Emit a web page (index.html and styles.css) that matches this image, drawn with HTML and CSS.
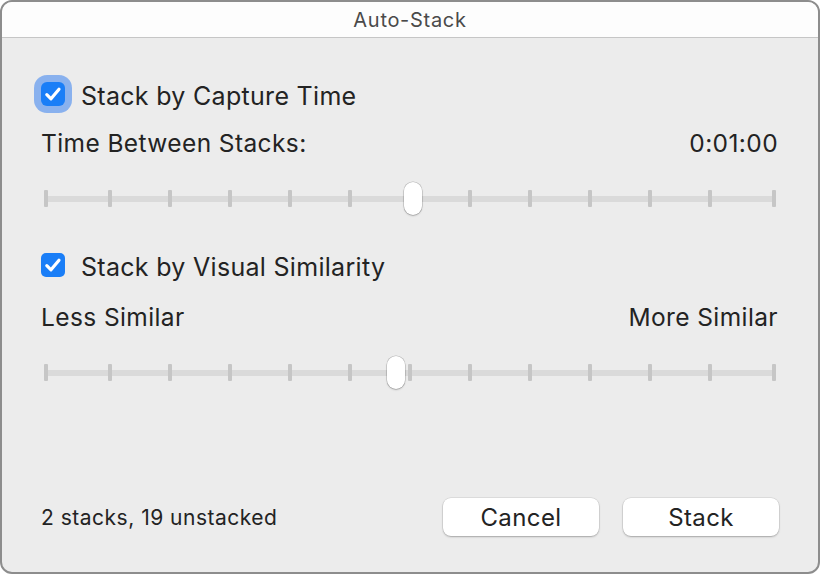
FILE: index.html
```html
<!DOCTYPE html>
<html>
<head>
<meta charset="utf-8">
<link rel="stylesheet" href="styles.css">
</head>
<body>
<div class="window">
  <div class="titlebar">Auto-Stack</div>
  <div class="content">
    <div class="check-row first">
      <span class="checkbox focused"><svg viewBox="0 0 24 24" width="24" height="24"><path d="M5.8 12.6 L10 16.8 L18 7.2" fill="none" stroke="#fff" stroke-width="3.2" stroke-linecap="round" stroke-linejoin="round"/></svg></span>
      <span class="check-label">Stack by Capture Time</span>
    </div>
    <div class="label-row row-a">
      <span>Time Between Stacks:</span>
      <span>0:01:00</span>
    </div>
    <div class="slider slider-a">
      <div class="track"></div>
      <div class="ticks">
        <i></i><i></i><i></i><i></i><i></i><i></i><i></i><i></i><i></i><i></i><i></i><i></i><i></i>
      </div>
      <div class="thumb thumb-a"></div>
    </div>
    <div class="check-row second">
      <span class="checkbox"><svg viewBox="0 0 24 24" width="24" height="24"><path d="M5.8 12.6 L10 16.8 L18 7.2" fill="none" stroke="#fff" stroke-width="3.2" stroke-linecap="round" stroke-linejoin="round"/></svg></span>
      <span class="check-label">Stack by Visual Similarity</span>
    </div>
    <div class="label-row row-b">
      <span>Less Similar</span>
      <span>More Similar</span>
    </div>
    <div class="slider slider-b">
      <div class="track"></div>
      <div class="ticks">
        <i></i><i></i><i></i><i></i><i></i><i></i><i></i><i></i><i></i><i></i><i></i><i></i><i></i>
      </div>
      <div class="thumb thumb-b"></div>
    </div>
    <div class="footer">
      <span class="status">2 stacks, 19 unstacked</span>
      <div class="buttons">
        <button class="btn">Cancel</button>
        <button class="btn">Stack</button>
      </div>
    </div>
  </div>
</div>
</body>
</html>
```

FILE: styles.css
```css
* { box-sizing: border-box; }
html, body { margin: 0; padding: 0; }
body {
  width: 820px;
  height: 574px;
  background: #ffffff;
  font-family: Inter, "Liberation Sans", sans-serif;
  color: #232323;
}
.window {
  width: 820px;
  height: 574px;
  border: 2px solid #8d8d8d;
  border-radius: 12px;
  overflow: hidden;
  background: #ececec;
  display: flex;
  flex-direction: column;
}
.titlebar {
  height: 36px;
  background: #fdfdfd;
  border-bottom: 1px solid #c6c6c6;
  display: flex;
  align-items: center;
  justify-content: center;
  font-size: 20px;
  color: #4a4a4a;
  letter-spacing: 0.7px;
  padding-top: 1px;
}
.content {
  flex: 1;
  padding: 0 39px 0 39px;
  display: flex;
  flex-direction: column;
}
.check-row {
  height: 38px;
  display: flex;
  align-items: center;
}
.check-row.first { margin-top: 37px; }
.check-row.second { margin-top: 30px; }
.checkbox {
  width: 24px;
  height: 24px;
  border-radius: 5px;
  background: #1a7ef7;
  display: inline-flex;
  flex: none;
}
.checkbox.focused {
  box-shadow: 0 0 0 7px rgba(72, 138, 240, 0.6);
  border-radius: 6px;
}
.check-label {
  margin-left: 16px;
  font-size: 25px;
  letter-spacing: 0.3px;
  padding-top: 3px;
}
.label-row {
  height: 30px;
  display: flex;
  justify-content: space-between;
  align-items: center;
  font-size: 24.5px;
  letter-spacing: 0.4px;
  padding-right: 1px;
}
.row-a { margin-top: 15px; }
.row-b { margin-top: 18px; }
.slider {
  position: relative;
  width: 732px;
  height: 34px;
  margin-left: 3px;
}
.slider-a { margin-top: 24px; }
.slider-b { margin-top: 24px; }
.track {
  position: absolute;
  left: 0;
  right: 0;
  top: 14px;
  height: 6px;
  background: #dadada;
  border-radius: 2px;
}
.ticks {
  position: absolute;
  left: 0;
  top: 8px;
  display: flex;
}
.ticks i {
  display: block;
  width: 4px;
  height: 17px;
  background: #c6c6c6;
  margin-left: 56px;
  border-radius: 1px;
}
.ticks i:first-child { margin-left: 0; }
.ticks i:nth-child(2) { margin-left: 60px; }
.ticks i:last-child { margin-left: 60px; }
.thumb {
  position: absolute;
  top: 0;
  width: 18px;
  height: 33px;
  background: #ffffff;
  border-radius: 9px;
  box-shadow: 0 0 0 0.5px rgba(0,0,0,0.22), 0 1px 2px rgba(0,0,0,0.2);
}
.thumb-a { left: 360px; }
.thumb-b { left: 343px; }
.footer {
  margin-top: 108px;
  display: flex;
  align-items: center;
  justify-content: space-between;
}
.status {
  font-size: 21px;
  letter-spacing: 0.5px;
}
.buttons {
  display: flex;
  gap: 24px;
}
.btn {
  width: 156px;
  height: 38px;
  border: none;
  border-radius: 8px;
  background: #ffffff;
  font-family: Inter, "Liberation Sans", sans-serif;
  font-size: 24px;
  letter-spacing: 0.4px;
  color: #232323;
  box-shadow: 0 0 0 0.5px rgba(0,0,0,0.12), 0 1px 2px rgba(0,0,0,0.25);
  padding: 0;
}
```
